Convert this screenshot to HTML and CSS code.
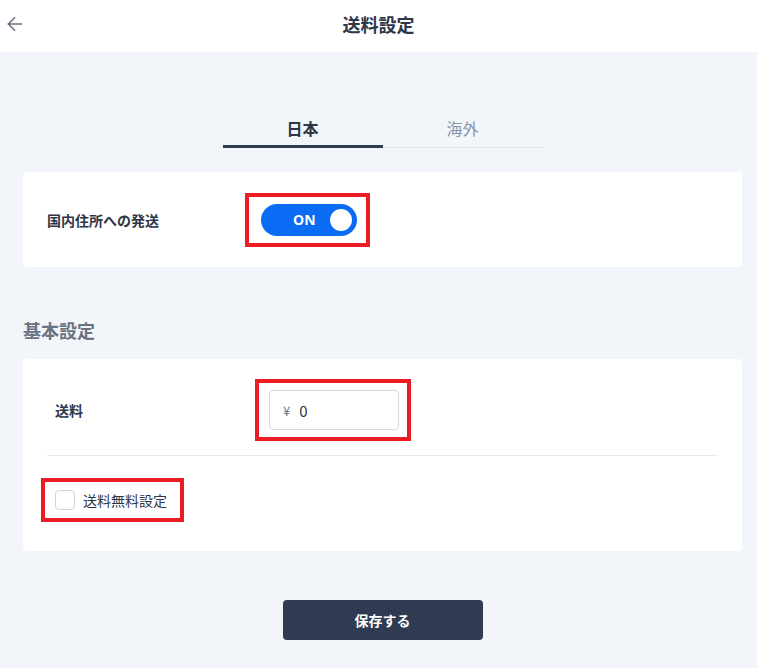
FILE: index.html
```html
<!DOCTYPE html>
<html lang="ja">
<head>
    <meta charset="UTF-8">
    <title>送料設定</title>
    <link rel="stylesheet" href="styles.css">
</head>
<body>
<header class="topbar">
    <a class="back" href="#">
        <svg width="16" height="16" viewBox="0 0 16 16" fill="none" stroke="#6b7280" stroke-width="1.6">
            <path d="M15 8H1.5M8 1.2L1.3 8L8 14.8"/>
        </svg>
    </a>
    <h1 class="title">送料設定</h1>
</header>

<main class="page">
    <div class="tabs">
        <div class="tab active">日本</div>
        <div class="tab">海外</div>
    </div>

    <section class="card card-ship">
        <div class="label">国内住所への発送</div>
        <div class="mark mark-toggle">
            <div class="toggle">
                <span>ON</span>
                <i class="knob"></i>
            </div>
        </div>
    </section>

    <h2 class="section-title">基本設定</h2>

    <section class="card card-basic">
        <div class="row">
            <div class="label">送料</div>
            <div class="mark mark-input">
                <div class="price-input">
                    <span class="yen">¥</span>
                    <span class="value">0</span>
                </div>
            </div>
        </div>
        <hr class="divider">
        <div class="mark mark-check">
            <label class="check">
                <i class="box"></i>
                <span>送料無料設定</span>
            </label>
        </div>
    </section>

    <div class="actions">
        <button class="save">保存する</button>
    </div>
</main>
</body>
</html>
```

FILE: styles.css
```css
body {
    margin: 0;
    font-family: "Noto Sans CJK JP", "Noto Sans", sans-serif;
    background: #f2f5fa;
    color: #2d3748;
}
.topbar {
    height: 52px;
    box-sizing: border-box;
    padding-bottom: 5px;
    background: white;
    display: flex;
    align-items: center;
    justify-content: center;
    position: relative;
}
.back {
    position: absolute;
    left: 7px;
    top: 16px;
    display: flex;
}
.title {
    margin: 0;
    font-size: 18px;
    font-weight: bold;
    color: #2d3748;
}
.page {
    padding: 58px 15px 0 23px;
}
.tabs {
    display: flex;
    justify-content: center;
}
.tab {
    width: 160px;
    height: 37px;
    text-align: center;
    font-size: 16px;
    line-height: 36px;
    color: #8a94a6;
    border-bottom: 1px solid #dfe3ea;
}
.tab.active {
    color: #2d3748;
    font-weight: bold;
    height: 35px;
    border-bottom: 3px solid #2e3a50;
}
.card {
    background: white;
    border-radius: 4px;
}
.card-ship {
    margin-top: 24px;
    height: 95px;
    display: flex;
    align-items: center;
}
.label {
    font-size: 14px;
    font-weight: bold;
    color: #2d3748;
}
.card-ship .label {
    width: 198px;
    padding-left: 24px;
}
.mark {
    border: 4px solid #ed1c24;
    box-sizing: border-box;
    display: flex;
    align-items: center;
}
.mark-toggle {
    width: 125px;
    height: 54px;
    padding-left: 12px;
}
.toggle {
    width: 96px;
    height: 32px;
    border-radius: 16px;
    background: #0a6cf5;
    display: flex;
    align-items: center;
    position: relative;
}
.toggle span {
    color: white;
    font-family: "Open Sans", sans-serif;
    font-weight: bold;
    font-size: 14px;
    margin-left: 32px;
}
.knob {
    position: absolute;
    right: 5px;
    top: 5px;
    width: 22px;
    height: 22px;
    border-radius: 50%;
    background: white;
}
.section-title {
    margin: 50px 0 16px;
    font-size: 18px;
    font-weight: bold;
    color: #6b7383;
}
.card-basic {
    height: 192px;
    padding: 20px 24px 0 18px;
    box-sizing: border-box;
}
.row {
    display: flex;
    align-items: center;
}
.row .label {
    width: 200px;
    padding-left: 14px;
}
.mark-input {
    width: 156px;
    height: 62px;
    padding-left: 10px;
}
.price-input {
    width: 130px;
    height: 40px;
    box-sizing: border-box;
    border: 1px solid #d3d8e0;
    border-radius: 4px;
    display: flex;
    align-items: center;
    font-size: 15px;
    color: #2d3748;
}
.yen {
    color: #6b7383;
    margin-left: 13px;
    font-size: 13px;
}
.value {
    margin-left: 9px;
}
.divider {
    border: 0;
    border-top: 1px solid #e6e9ef;
    margin: 14px 0 0 6px;
}
.mark-check {
    margin-top: 22px;
    width: 143px;
    height: 44px;
    padding-left: 10px;
}
.check {
    display: flex;
    align-items: center;
    font-size: 14px;
    color: #2d3748;
}
.box {
    width: 20px;
    height: 20px;
    box-sizing: border-box;
    border: 1px solid #cdd3dc;
    border-radius: 4px;
    margin-right: 8px;
}
.actions {
    display: flex;
    justify-content: center;
    padding-top: 49px;
}
.save {
    width: 200px;
    height: 40px;
    background: #2e3b52;
    color: white;
    border: none;
    border-radius: 4px;
    font-family: inherit;
    font-size: 14px;
    font-weight: bold;
}
```
